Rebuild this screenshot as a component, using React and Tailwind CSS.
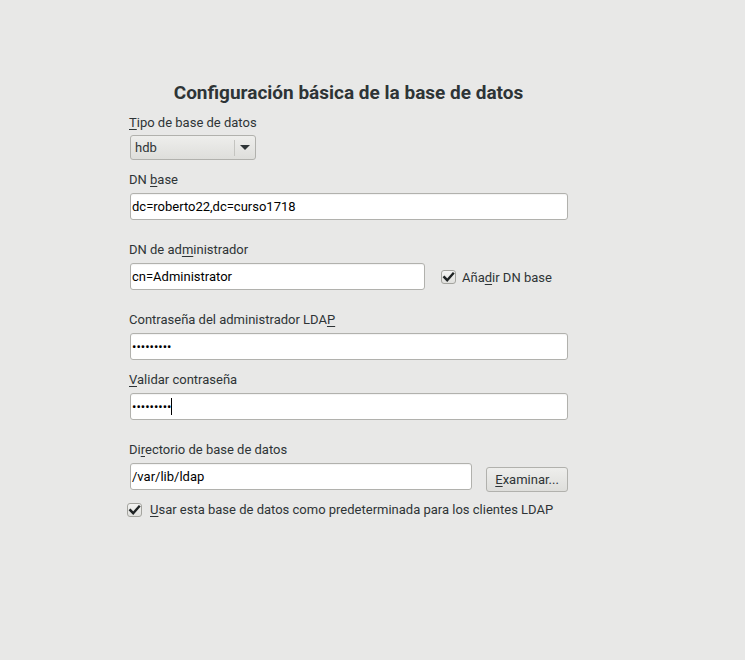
import React from "react";

const font = { fontFamily: "Roboto, 'Noto Sans', sans-serif" };

function CheckBox({ className = "" }) {
  return (
    <span
      className={`relative inline-block w-[15px] h-[14px] rounded-[3px] border border-[#a4a49f] bg-gradient-to-b from-[#f4f4f3] to-[#e0e0dd] ${className}`}
    >
      <svg
        viewBox="0 0 15 14"
        className="absolute left-[-1px] top-[-1px] w-[15px] h-[14px]"
      >
        <path
          d="M3.3 7.2 L6.2 10.2 L12 3.6"
          fill="none"
          stroke="#1f2324"
          strokeWidth="2.4"
          strokeLinecap="square"
          strokeLinejoin="miter"
        />
      </svg>
    </span>
  );
}

function Label({ children, className = "" }) {
  return (
    <div className={`h-[17px] pt-[1px] leading-[17px] text-[13px] text-[#2e3436] ${className}`}>
      {children}
    </div>
  );
}

function Input({ value, className = "", children }) {
  return (
    <div
      className={`h-[27px] flex items-center rounded-[3px] border border-[#b1b1ad] bg-white pl-[1px] text-[13px] text-[#000] shadow-[inset_0_1px_1px_rgba(0,0,0,0.05)] ${className}`}
    >
      {value}
      {children}
    </div>
  );
}

const U = ({ children }) => (
  <span className="underline underline-offset-[2px] decoration-[1px]">{children}</span>
);

export default function App() {
  return (
    <div className="w-[745px] h-[660px] bg-[#e8e8e7] overflow-hidden" style={font}>
      <div className="ml-[129px] w-[439px] pt-[80px] flex flex-col">
        <div className="h-[24px] pt-[1px] leading-[24px] text-center text-[19px] font-bold text-[#2e3436] whitespace-nowrap">
          Configuración básica de la base de datos
        </div>

        <Label className="mt-[9px]">
          <U>T</U>ipo de base de datos
        </Label>
        <div className="mt-[5px] ml-[1px] w-[126px] h-[25px] flex items-center rounded-[3px] border border-[#b1b1ad] bg-gradient-to-b from-[#eeeeec] to-[#dededb] text-[13px] text-[#2e3436]">
          <span className="pl-[4px] flex-1">hdb</span>
          <span className="w-px h-[16px] bg-[#c4c4c0]" />
          <span className="w-[20px] flex justify-center">
            <svg width="10" height="6" viewBox="0 0 10 6">
              <path d="M0 0 H10 L5 5 Z" fill="#2e3436" />
            </svg>
          </span>
        </div>

        <Label className="mt-[10px]">
          DN <U>b</U>ase
        </Label>
        <Input className="mt-[6px] ml-[1px]" value="dc=roberto22,dc=curso1718" />

        <Label className="mt-[20px]">
          DN de ad<U>m</U>inistrador
        </Label>
        <div className="mt-[6px] flex items-center">
          <Input className="ml-[1px] w-[295px]" value="cn=Administrator" />
          <CheckBox className="ml-[16px]" />
          <span className="ml-[6px] text-[13px] text-[#2e3436] mt-[2px]">
            Aña<U>d</U>ir DN base
          </span>
        </div>

        <Label className="mt-[20px]">
          Contraseña del administrador LDA<U>P</U>
        </Label>
        <Input className="mt-[6px] ml-[1px]">
          <span className="text-[13px]">•••••••••</span>
        </Input>

        <Label className="mt-[10px]">
          <U>V</U>alidar contraseña
        </Label>
        <Input className="mt-[6px] ml-[1px]">
          <span className="text-[13px]">•••••••••</span>
          <span className="w-px h-[17px] bg-black" />
        </Input>

        <Label className="mt-[20px]">
          Di<U>r</U>ectorio de base de datos
        </Label>
        <div className="mt-[6px] flex items-start">
          <Input className="ml-[1px] w-[343px]" value="/var/lib/ldap" />
          <div className="ml-[14px] mt-[4px] w-[82px] h-[25px] flex items-center justify-center rounded-[3px] border border-[#b1b1ad] bg-gradient-to-b from-[#eeeeec] to-[#dededb] text-[13px] text-[#2e3436]">
            <span>
              <U>E</U>xaminar...
            </span>
          </div>
        </div>

        <div className="mt-[8px] flex items-center ml-[-2px]">
          <CheckBox />
          <span className="ml-[8px] text-[13px] text-[#2e3436]">
            <U>U</U>sar esta base de datos como predeterminada para los clientes LDAP
          </span>
        </div>
      </div>
    </div>
  );
}
